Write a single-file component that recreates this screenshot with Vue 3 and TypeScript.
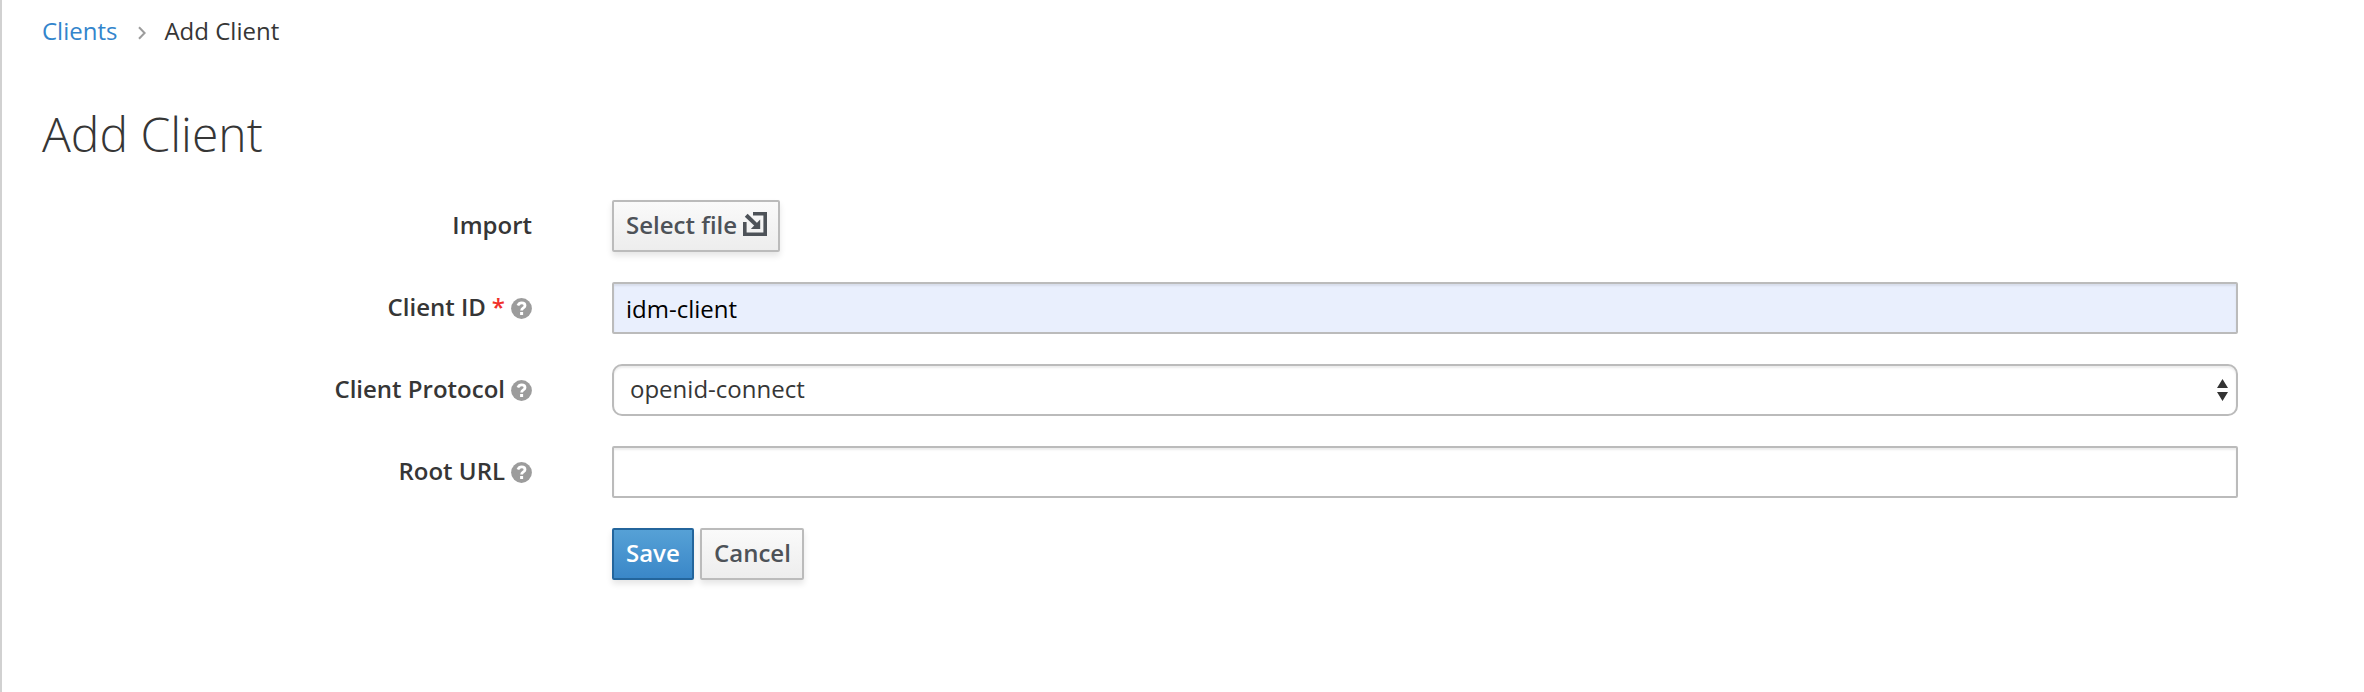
<script setup lang="ts">
import { ref } from 'vue'

const clientId = ref('idm-client')
const protocol = ref('openid-connect')
const rootUrl = ref('')
</script>

<template>
  <main class="page">
    <nav class="breadcrumb">
      <a class="crumb-link">Clients</a>
      <svg class="chevron" width="8" height="14" viewBox="0 0 8 14">
        <path d="M1 1.2 6.6 7 1 12.8" fill="none" stroke="#9c9c9c" stroke-width="2" />
      </svg>
      <span>Add Client</span>
    </nav>

    <h1 class="title">Add Client</h1>

    <form class="form" @submit.prevent>
      <div class="row">
        <label class="label">Import</label>
        <button type="button" class="btn import">
          <span>Select file</span>
          <svg class="import-icon" width="24" height="24" viewBox="0 0 24 24">
            <path d="M10 1.8H22.2V22.2H1.8V10" fill="none" stroke="#4d5258" stroke-width="3.6" />
            <path d="M3.2 3.2 13 12.6" fill="none" stroke="#4d5258" stroke-width="4" />
            <path d="M17.2 7.6V17H7.8Z" fill="#4d5258" />
          </svg>
        </button>
      </div>

      <div class="row">
        <label class="label">
          <span>Client ID</span>
          <span class="required">*</span>
          <svg class="help" width="21" height="21" viewBox="0 0 21 21">
            <circle cx="10.5" cy="10.5" r="10.4" fill="#9c9c9c" />
            <path d="M6.9 7.5C7.7 5.7 8.9 4.9 10.6 4.9C12.6 4.9 14 6 14 7.7C14 10 10.6 9.9 10.6 12.5" fill="none" stroke="#fff" stroke-width="2.8" />
            <rect x="9.1" y="14" width="3" height="3" fill="#fff" />
          </svg>
        </label>
        <input v-model="clientId" class="field filled" type="text" />
      </div>

      <div class="row">
        <label class="label">
          <span>Client Protocol</span>
          <svg class="help" width="21" height="21" viewBox="0 0 21 21">
            <circle cx="10.5" cy="10.5" r="10.4" fill="#9c9c9c" />
            <path d="M6.9 7.5C7.7 5.7 8.9 4.9 10.6 4.9C12.6 4.9 14 6 14 7.7C14 10 10.6 9.9 10.6 12.5" fill="none" stroke="#fff" stroke-width="2.8" />
            <rect x="9.1" y="14" width="3" height="3" fill="#fff" />
          </svg>
        </label>
        <div class="field select" role="listbox">
          <span>{{ protocol }}</span>
          <svg class="arrows" width="11" height="22" viewBox="0 0 11 22">
            <path d="M0 9 5.5 0 11 9ZM0 13H11L5.5 22Z" fill="#333" />
          </svg>
        </div>
      </div>

      <div class="row">
        <label class="label">
          <span>Root URL</span>
          <svg class="help" width="21" height="21" viewBox="0 0 21 21">
            <circle cx="10.5" cy="10.5" r="10.4" fill="#9c9c9c" />
            <path d="M6.9 7.5C7.7 5.7 8.9 4.9 10.6 4.9C12.6 4.9 14 6 14 7.7C14 10 10.6 9.9 10.6 12.5" fill="none" stroke="#fff" stroke-width="2.8" />
            <rect x="9.1" y="14" width="3" height="3" fill="#fff" />
          </svg>
        </label>
        <input v-model="rootUrl" class="field" type="text" />
      </div>

      <div class="row">
        <span class="label"></span>
        <div class="actions">
          <button type="submit" class="btn primary">Save</button>
          <button type="button" class="btn cancel">Cancel</button>
        </div>
      </div>
    </form>
  </main>
</template>

<style>
body {
  margin: 0;
  background: #fff;
}
</style>

<style scoped>
.page {
  box-sizing: border-box;
  height: 692px;
  padding: 0 126px 0 40px;
  border-left: 2px solid #d1d1d1;
  background: #fff;
  color: #363636;
  font-family: 'Open Sans', sans-serif;
  font-size: 24px;
  line-height: 40px;
  overflow: hidden;
}

.breadcrumb {
  display: flex;
  align-items: center;
  height: 40px;
  padding-top: 11px;
}

.crumb-link {
  color: #3385cc;
}

.chevron {
  margin: 3px 18px 0 21px;
}

.title {
  height: 52px;
  margin: 57px 0 40px;
  font-size: 48px;
  font-weight: 300;
  line-height: 52px;
}

.form {
  display: grid;
  gap: 30px;
}

.row {
  display: grid;
  grid-template-columns: 490px 1fr;
  column-gap: 80px;
  align-items: center;
  justify-items: start;
  height: 52px;
}

.label {
  box-sizing: border-box;
  display: flex;
  align-items: center;
  justify-self: end;
  height: 52px;
  padding-bottom: 2px;
  font-weight: 600;
}

.required {
  margin-left: 6px;
  color: #f0302a;
}

.help {
  margin: 2px 0 0 6px;
}

.field {
  box-sizing: border-box;
  width: 100%;
  height: 52px;
  margin: 0;
  padding: 3px 12px;
  border: 2px solid #bbb;
  border-radius: 2px;
  outline: none;
  background: #fff;
  box-shadow: inset 0 2px 2px rgba(3, 3, 3, 0.075);
  color: #363636;
  font: 400 24px/40px 'Open Sans', sans-serif;
}

.filled {
  background: #e9effd;
  color: #000;
}

.select {
  display: flex;
  align-items: center;
  justify-content: space-between;
  padding: 0 8px 2px 16px;
  border-radius: 10px;
}

.arrows {
  margin-top: 2px;
}

.actions {
  display: flex;
  gap: 6px;
}

.btn {
  box-sizing: border-box;
  display: flex;
  align-items: center;
  height: 52px;
  margin: 0;
  padding: 0 12px 2px;
  border: 2px solid #bbb;
  border-radius: 2px;
  background: linear-gradient(#fafafa, #ededed);
  box-shadow: 0 4px 6px rgba(3, 3, 3, 0.1);
  color: #4d5258;
  font: 600 24px/40px 'Open Sans', sans-serif;
  white-space: nowrap;
}

.import {
  width: 168px;
}

.primary {
  width: 82px;
  border-color: #23659c;
  background: linear-gradient(#56a1d6, #3a87c8);
  color: #fff;
}

.cancel {
  width: 104px;
}

.import-icon {
  flex: none;
  margin: 0 0 3px 6px;
}
</style>
